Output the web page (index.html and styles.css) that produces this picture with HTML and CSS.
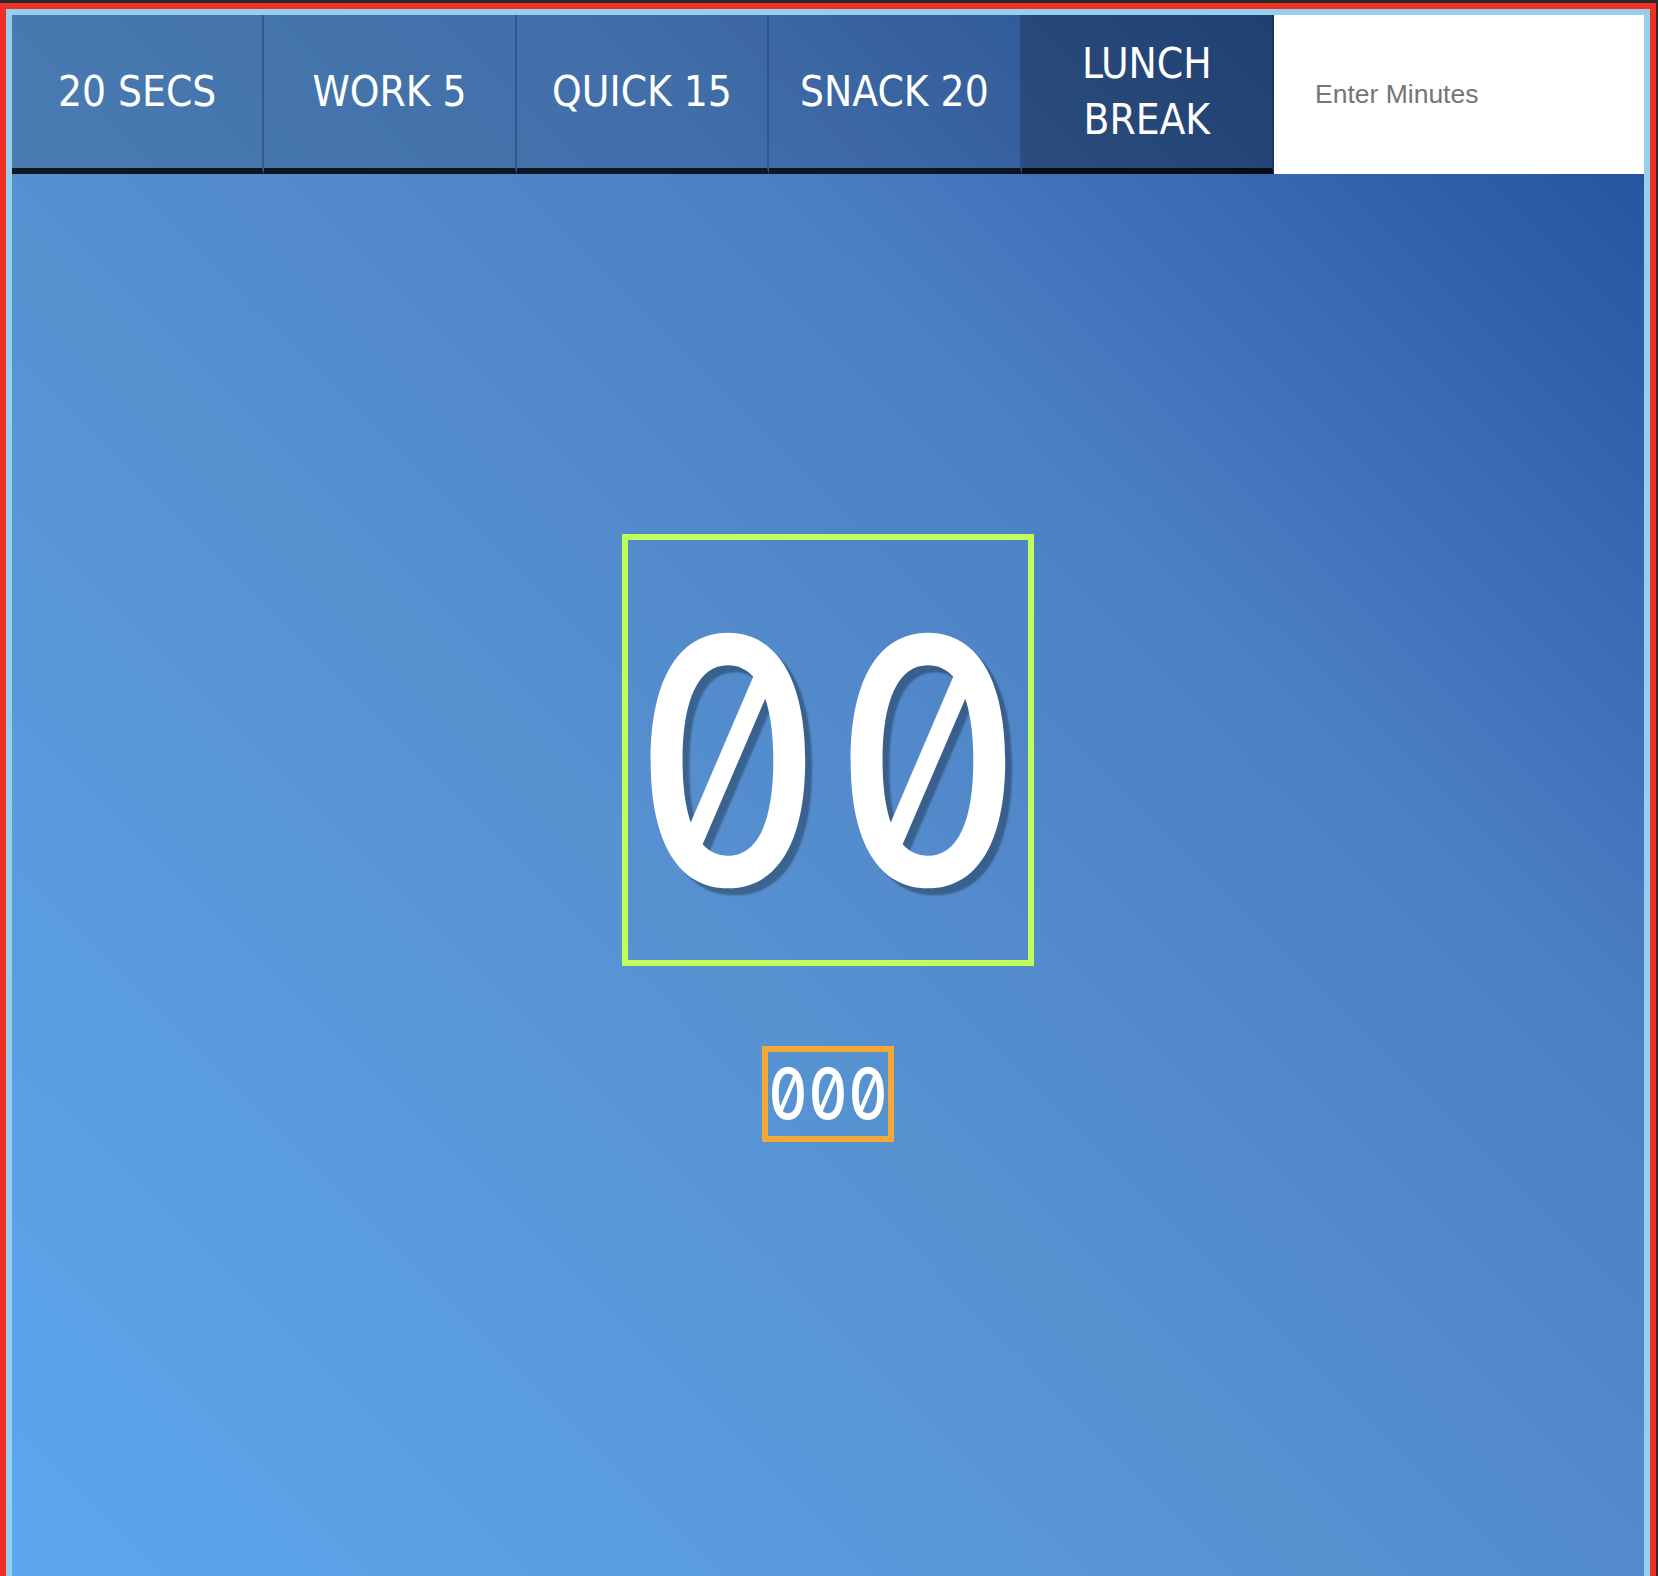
FILE: index.html
```html
<!DOCTYPE html>
<html lang="en">
<head>
<meta charset="utf-8">
<title>Timer</title>
<link rel="stylesheet" href="styles.css">
</head>
<body>
<div class="frame">
  <div class="app">
    <nav class="bar">
      <button class="preset">20 SECS</button>
      <button class="preset">WORK 5</button>
      <button class="preset">QUICK 15</button>
      <button class="preset">SNACK 20</button>
      <button class="preset preset-active">LUNCH BREAK</button>
      <input class="minutes" type="text" placeholder="Enter Minutes">
    </nav>
    <main class="stage">
      <div class="clock"><span class="digit">0</span><span class="digit">0</span></div>
      <div class="millis"><span class="digit">0</span><span class="digit">0</span><span class="digit">0</span></div>
    </main>
  </div>
</div>
</body>
</html>
```

FILE: styles.css
```css
html, body {
  height: 100%;
  overflow: hidden;
}
body {
  margin: 0;
  padding-top: 3px;
  background: #2b2b2b;
  box-sizing: border-box;
}
.frame {
  width: 1656px;
  height: 1640px;
  box-sizing: border-box;
  border: 6px solid #ee3124;
  border-bottom: 0;
}
.app {
  height: 100%;
  box-sizing: border-box;
  border: 6px solid #95cfeb;
  border-bottom: 0;
  background: linear-gradient(to top right, #5ca8f0 0%, #5792d1 42%, #4c80c4 68%, #1f4c9b 100%);
  display: flex;
  flex-direction: column;
}
.bar {
  display: grid;
  grid-template-columns: repeat(5, 1fr) 370px;
  height: 159px;
}
.preset {
  margin: 0;
  padding: 0 10px;
  border: 0;
  border-right: 2px solid rgba(10, 30, 60, 0.28);
  border-bottom: 6px solid #0e1621;
  background: rgba(0, 0, 0, 0.14);
  color: #ffffff;
  font-family: "DejaVu Sans Condensed", "DejaVu Sans", sans-serif;
  font-stretch: condensed;
  font-size: 42px;
  line-height: 56px;
  text-align: center;
  cursor: pointer;
}
.preset-active {
  background: rgba(0, 0, 0, 0.32);
  border-right-color: rgba(0, 0, 0, 0.2);
  border-bottom-color: #080d16;
}
.minutes {
  margin: 0;
  border: 0;
  padding: 0 0 0 41px;
  background: #ffffff;
  font-family: "Liberation Sans", Arial, sans-serif;
  font-size: 26.5px;
  color: #333;
  outline: none;
  min-width: 0;
}
.minutes::placeholder {
  color: #757575;
}
.stage {
  display: flex;
  flex-direction: column;
  align-items: center;
  padding-top: 360px;
  gap: 80px;
}
.clock,
.millis {
  display: flex;
  font-family: Inter, "DejaVu Sans", sans-serif;
  font-weight: 500;
  font-variant-numeric: slashed-zero tabular-nums;
  font-feature-settings: "zero" 1, "tnum" 1;
  color: #ffffff;
  white-space: nowrap;
}
.digit {
  display: flex;
  justify-content: center;
  transform: scaleX(0.86);
}
.clock {
  border: 6px solid #c0fe5a;
  padding-top: 21px;
  height: 399px;
  font-size: 342px;
  line-height: 399px;
  text-shadow: 8px 7px 2px rgba(0, 0, 0, 0.3);
}
.clock .digit {
  width: 200px;
}
.millis {
  border: 6px solid #f5a83a;
  height: 84px;
  font-size: 70px;
  line-height: 84px;
}
.millis .digit {
  width: 40px;
}
```
